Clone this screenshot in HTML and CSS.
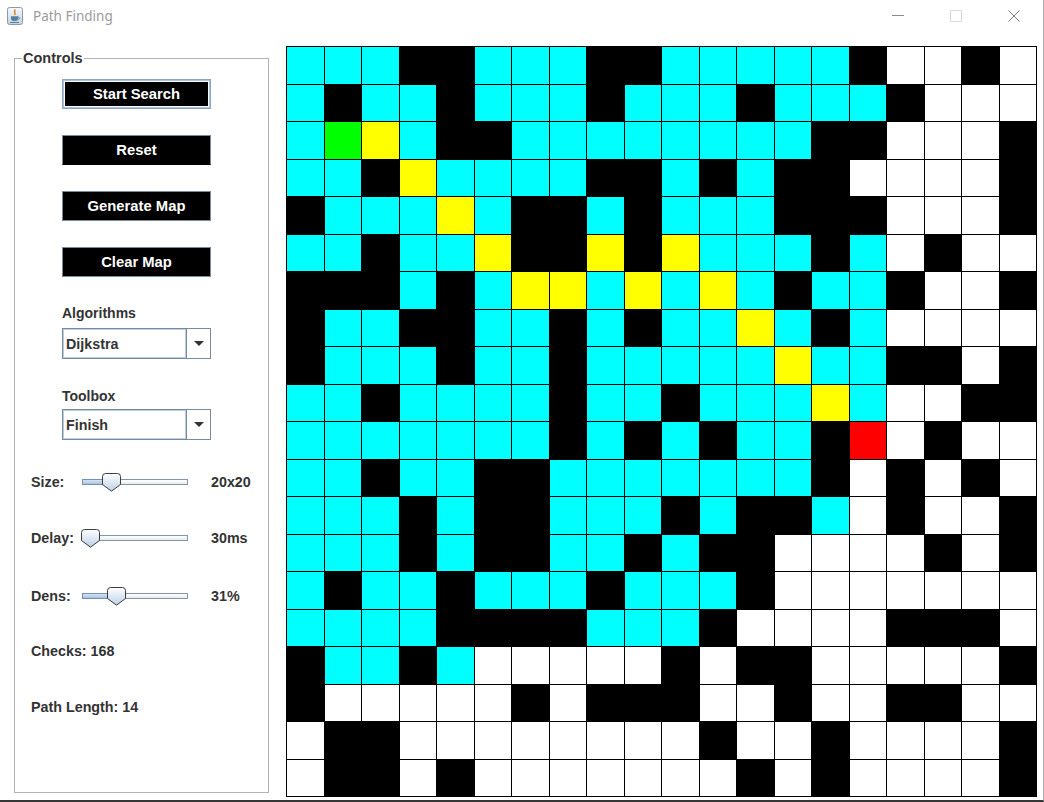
FILE: index.html
```html
<!DOCTYPE html>
<html lang="en">
<head>
<meta charset="utf-8">
<title>Path Finding</title>
<link rel="stylesheet" href="styles.css">
</head>
<body>
<div class="window">
  <div class="titlebar">
    <svg class="app-icon" width="16" height="18" viewBox="0 0 16 18">
      <defs><linearGradient id="ig" x1="0" y1="0" x2="0" y2="1"><stop offset="0" stop-color="#f7f9fb"/><stop offset="1" stop-color="#c6d0dc"/></linearGradient></defs>
      <rect x="0.5" y="0.5" width="15" height="17" rx="2" fill="url(#ig)" stroke="#8c9aab"/>
      <path d="M8.2 2.5 C6.2 4.5 9.4 5.6 7.6 8" stroke="#e76f00" fill="none" stroke-width="1.3"/>
      <path d="M4 9.3 H11 V11.5 C11 13.4 9.6 14 7.5 14 C5.4 14 4 13.4 4 11.5 Z" fill="#5382a1"/>
      <path d="M11 10 C13.2 10 13.2 12.6 10.6 12.6" stroke="#5382a1" fill="none"/>
      <path d="M3 15.5 H12" stroke="#5382a1"/>
    </svg>
    <span class="title">Path Finding</span>
    <div class="caption-buttons">
      <span class="cap"><svg width="12" height="12" viewBox="0 0 12 12"><path d="M0 5.5 H12" stroke="#8a8a8a"/></svg></span>
      <span class="cap"><svg width="12" height="12" viewBox="0 0 12 12"><rect x="0.5" y="0.5" width="11" height="11" fill="none" stroke="#dcdcdc"/></svg></span>
      <span class="cap"><svg width="12" height="12" viewBox="0 0 12 12"><path d="M0.5 0.5 L11.5 11.5 M11.5 0.5 L0.5 11.5" stroke="#7a7a7a"/></svg></span>
    </div>
  </div>
  <div class="main">
    <div class="side">
      <fieldset class="controls">
        <legend>Controls</legend>
        <div class="controls-body">
          <button class="btn btn-first btn-focused">Start Search</button>
          <button class="btn btn-pressed">Reset</button>
          <button class="btn">Generate Map</button>
          <button class="btn">Clear Map</button>
          <div class="label label-algo">Algorithms</div>
          <div class="combo combo-algo">
            <span class="combo-field">Dijkstra</span>
            <span class="combo-btn"><span class="arrow"></span></span>
          </div>
          <div class="label label-tool">Toolbox</div>
          <div class="combo combo-tool">
            <span class="combo-field">Finish</span>
            <span class="combo-btn"><span class="arrow"></span></span>
          </div>
          <div class="slider-row row-size">
            <span class="slider-label">Size:</span>
            <span class="track"><span class="fill" style="width:29px"></span><svg class="thumb" style="left:19px" width="19" height="19" viewBox="0 0 19 19"><defs><linearGradient id="tg1" x1="0" y1="0" x2="0" y2="1"><stop offset="0" stop-color="#ffffff"/><stop offset="1" stop-color="#bcd0e6"/></linearGradient></defs><path d="M0.5 3.5 Q0.5 0.5 3.5 0.5 H15.5 Q18.5 0.5 18.5 3.5 V11.5 L9.5 18.2 L0.5 11.5 Z" fill="url(#tg1)" stroke="#3c3c3c"/></svg></span>
            <span class="slider-value">20x20</span>
          </div>
          <div class="slider-row row-delay">
            <span class="slider-label">Delay:</span>
            <span class="track"><svg class="thumb" style="left:-2px" width="19" height="19" viewBox="0 0 19 19"><defs><linearGradient id="tg2" x1="0" y1="0" x2="0" y2="1"><stop offset="0" stop-color="#ffffff"/><stop offset="1" stop-color="#bcd0e6"/></linearGradient></defs><path d="M0.5 3.5 Q0.5 0.5 3.5 0.5 H15.5 Q18.5 0.5 18.5 3.5 V11.5 L9.5 18.2 L0.5 11.5 Z" fill="url(#tg2)" stroke="#3c3c3c"/></svg></span>
            <span class="slider-value">30ms</span>
          </div>
          <div class="slider-row row-dens">
            <span class="slider-label">Dens:</span>
            <span class="track"><span class="fill" style="width:34px"></span><svg class="thumb" style="left:24px" width="19" height="19" viewBox="0 0 19 19"><defs><linearGradient id="tg3" x1="0" y1="0" x2="0" y2="1"><stop offset="0" stop-color="#ffffff"/><stop offset="1" stop-color="#bcd0e6"/></linearGradient></defs><path d="M0.5 3.5 Q0.5 0.5 3.5 0.5 H15.5 Q18.5 0.5 18.5 3.5 V11.5 L9.5 18.2 L0.5 11.5 Z" fill="url(#tg3)" stroke="#3c3c3c"/></svg></span>
            <span class="slider-value">31%</span>
          </div>
          <div class="stat stat-checks">Checks: 168</div>
          <div class="stat stat-path">Path Length: 14</div>
        </div>
      </fieldset>
    </div>
    <div class="grid">
<i class="v"></i><i class="v"></i><i class="v"></i><i class="w"></i><i class="w"></i><i class="v"></i><i class="v"></i><i class="v"></i><i class="w"></i><i class="w"></i><i class="v"></i><i class="v"></i><i class="v"></i><i class="v"></i><i class="v"></i><i class="w"></i><i class="e"></i><i class="e"></i><i class="w"></i><i class="e"></i>
<i class="v"></i><i class="w"></i><i class="v"></i><i class="v"></i><i class="w"></i><i class="v"></i><i class="v"></i><i class="v"></i><i class="w"></i><i class="v"></i><i class="v"></i><i class="v"></i><i class="w"></i><i class="v"></i><i class="v"></i><i class="v"></i><i class="w"></i><i class="e"></i><i class="e"></i><i class="e"></i>
<i class="v"></i><i class="s"></i><i class="p"></i><i class="v"></i><i class="w"></i><i class="w"></i><i class="v"></i><i class="v"></i><i class="v"></i><i class="v"></i><i class="v"></i><i class="v"></i><i class="v"></i><i class="v"></i><i class="w"></i><i class="w"></i><i class="e"></i><i class="e"></i><i class="e"></i><i class="w"></i>
<i class="v"></i><i class="v"></i><i class="w"></i><i class="p"></i><i class="v"></i><i class="v"></i><i class="v"></i><i class="v"></i><i class="w"></i><i class="w"></i><i class="v"></i><i class="w"></i><i class="v"></i><i class="w"></i><i class="w"></i><i class="e"></i><i class="e"></i><i class="e"></i><i class="e"></i><i class="w"></i>
<i class="w"></i><i class="v"></i><i class="v"></i><i class="v"></i><i class="p"></i><i class="v"></i><i class="w"></i><i class="w"></i><i class="v"></i><i class="w"></i><i class="v"></i><i class="v"></i><i class="v"></i><i class="w"></i><i class="w"></i><i class="w"></i><i class="e"></i><i class="e"></i><i class="e"></i><i class="w"></i>
<i class="v"></i><i class="v"></i><i class="w"></i><i class="v"></i><i class="v"></i><i class="p"></i><i class="w"></i><i class="w"></i><i class="p"></i><i class="w"></i><i class="p"></i><i class="v"></i><i class="v"></i><i class="v"></i><i class="w"></i><i class="v"></i><i class="e"></i><i class="w"></i><i class="e"></i><i class="e"></i>
<i class="w"></i><i class="w"></i><i class="w"></i><i class="v"></i><i class="w"></i><i class="v"></i><i class="p"></i><i class="p"></i><i class="v"></i><i class="p"></i><i class="v"></i><i class="p"></i><i class="v"></i><i class="w"></i><i class="v"></i><i class="v"></i><i class="w"></i><i class="e"></i><i class="e"></i><i class="w"></i>
<i class="w"></i><i class="v"></i><i class="v"></i><i class="w"></i><i class="w"></i><i class="v"></i><i class="v"></i><i class="w"></i><i class="v"></i><i class="w"></i><i class="v"></i><i class="v"></i><i class="p"></i><i class="v"></i><i class="w"></i><i class="v"></i><i class="e"></i><i class="e"></i><i class="e"></i><i class="e"></i>
<i class="w"></i><i class="v"></i><i class="v"></i><i class="v"></i><i class="w"></i><i class="v"></i><i class="v"></i><i class="w"></i><i class="v"></i><i class="v"></i><i class="v"></i><i class="v"></i><i class="v"></i><i class="p"></i><i class="v"></i><i class="v"></i><i class="w"></i><i class="w"></i><i class="e"></i><i class="w"></i>
<i class="v"></i><i class="v"></i><i class="w"></i><i class="v"></i><i class="v"></i><i class="v"></i><i class="v"></i><i class="w"></i><i class="v"></i><i class="v"></i><i class="w"></i><i class="v"></i><i class="v"></i><i class="v"></i><i class="p"></i><i class="v"></i><i class="e"></i><i class="e"></i><i class="w"></i><i class="w"></i>
<i class="v"></i><i class="v"></i><i class="v"></i><i class="v"></i><i class="v"></i><i class="v"></i><i class="v"></i><i class="w"></i><i class="v"></i><i class="w"></i><i class="v"></i><i class="w"></i><i class="v"></i><i class="v"></i><i class="w"></i><i class="f"></i><i class="e"></i><i class="w"></i><i class="e"></i><i class="e"></i>
<i class="v"></i><i class="v"></i><i class="w"></i><i class="v"></i><i class="v"></i><i class="w"></i><i class="w"></i><i class="v"></i><i class="v"></i><i class="v"></i><i class="v"></i><i class="v"></i><i class="v"></i><i class="v"></i><i class="w"></i><i class="e"></i><i class="w"></i><i class="e"></i><i class="w"></i><i class="e"></i>
<i class="v"></i><i class="v"></i><i class="v"></i><i class="w"></i><i class="v"></i><i class="w"></i><i class="w"></i><i class="v"></i><i class="v"></i><i class="v"></i><i class="w"></i><i class="v"></i><i class="w"></i><i class="w"></i><i class="v"></i><i class="e"></i><i class="w"></i><i class="e"></i><i class="e"></i><i class="w"></i>
<i class="v"></i><i class="v"></i><i class="v"></i><i class="w"></i><i class="v"></i><i class="w"></i><i class="w"></i><i class="v"></i><i class="v"></i><i class="w"></i><i class="v"></i><i class="w"></i><i class="w"></i><i class="e"></i><i class="e"></i><i class="e"></i><i class="e"></i><i class="w"></i><i class="e"></i><i class="w"></i>
<i class="v"></i><i class="w"></i><i class="v"></i><i class="v"></i><i class="w"></i><i class="v"></i><i class="v"></i><i class="v"></i><i class="w"></i><i class="v"></i><i class="v"></i><i class="v"></i><i class="w"></i><i class="e"></i><i class="e"></i><i class="e"></i><i class="e"></i><i class="e"></i><i class="e"></i><i class="e"></i>
<i class="v"></i><i class="v"></i><i class="v"></i><i class="v"></i><i class="w"></i><i class="w"></i><i class="w"></i><i class="w"></i><i class="v"></i><i class="v"></i><i class="v"></i><i class="w"></i><i class="e"></i><i class="e"></i><i class="e"></i><i class="e"></i><i class="w"></i><i class="w"></i><i class="w"></i><i class="e"></i>
<i class="w"></i><i class="v"></i><i class="v"></i><i class="w"></i><i class="v"></i><i class="e"></i><i class="e"></i><i class="e"></i><i class="e"></i><i class="e"></i><i class="w"></i><i class="e"></i><i class="w"></i><i class="w"></i><i class="e"></i><i class="e"></i><i class="e"></i><i class="e"></i><i class="e"></i><i class="w"></i>
<i class="w"></i><i class="e"></i><i class="e"></i><i class="e"></i><i class="e"></i><i class="e"></i><i class="w"></i><i class="e"></i><i class="w"></i><i class="w"></i><i class="w"></i><i class="e"></i><i class="e"></i><i class="w"></i><i class="e"></i><i class="e"></i><i class="w"></i><i class="w"></i><i class="e"></i><i class="e"></i>
<i class="e"></i><i class="w"></i><i class="w"></i><i class="e"></i><i class="e"></i><i class="e"></i><i class="e"></i><i class="e"></i><i class="e"></i><i class="e"></i><i class="e"></i><i class="w"></i><i class="e"></i><i class="e"></i><i class="w"></i><i class="e"></i><i class="e"></i><i class="e"></i><i class="e"></i><i class="w"></i>
<i class="e"></i><i class="w"></i><i class="w"></i><i class="e"></i><i class="w"></i><i class="e"></i><i class="e"></i><i class="e"></i><i class="e"></i><i class="e"></i><i class="e"></i><i class="e"></i><i class="w"></i><i class="e"></i><i class="w"></i><i class="e"></i><i class="e"></i><i class="e"></i><i class="e"></i><i class="w"></i>
    </div>
  </div>
</div>
</body>
</html>
```

FILE: styles.css
```css
* { box-sizing: border-box; }
html, body { margin: 0; padding: 0; background: #fff; }
body {
  width: 1044px;
  height: 802px;
  overflow: hidden;
  font-family: "Liberation Sans", Arial, sans-serif;
}

.window {
  width: 1044px;
  height: 802px;
  display: flex;
  flex-direction: column;
  background: #fff;
  border-right: 1px solid #a8a8a8;
  border-bottom: 2px solid #363636;
}

/* title bar */
.titlebar {
  flex: none;
  height: 32px;
  display: flex;
  align-items: center;
}
.app-icon { margin-left: 7px; flex: none; }
.title {
  margin-left: 10px;
  font-family: "Noto Sans", "Open Sans", sans-serif;
  font-size: 13.5px;
  color: #9c9c9c;
  line-height: 18px;
}
.caption-buttons {
  margin-left: auto;
  display: flex;
  height: 32px;
}
.cap {
  width: 58px;
  height: 32px;
  display: flex;
  align-items: center;
  justify-content: center;
}

/* main area */
.main {
  flex: 1;
  display: flex;
  align-items: flex-start;
}
.side { width: 286px; flex: none; }

.controls {
  margin: 18px 0 0 14px;
  width: 255px;
  height: 743px;
  border: 1px solid #b2b2b2;
  padding: 0;
  min-width: 0;
}
.controls legend {
  margin-left: 7px;
  padding: 0 1px;
  font-weight: bold;
  font-size: 14.5px;
  line-height: 16px;
  color: #333;
}
.controls-body {
  display: flex;
  flex-direction: column;
  align-items: flex-start;
}

.btn {
  margin: 26px 0 0 47px;
  width: 149px;
  height: 30px;
  padding: 0;
  background: #000;
  color: #fff;
  font-family: "Liberation Sans", Arial, sans-serif;
  font-weight: bold;
  font-size: 14.8px;
  border: 1px solid #7a8a99;
  border-radius: 0;
  display: flex;
  align-items: center;
  justify-content: center;
}
.btn-first { margin-top: 13px; }
.btn-focused {
  border-color: #8ea6c0;
  box-shadow: inset 0 0 0 1px #a9c3de, inset 0 0 0 2px #ffffff;
}
.btn-pressed { border-bottom-color: #000; }

.label {
  margin-left: 47px;
  font-weight: bold;
  font-size: 14px;
  line-height: 16px;
  color: #333;
}
.label-algo { margin-top: 28px; }
.label-tool { margin-top: 29px; }

.combo {
  margin-left: 47px;
  width: 149px;
  height: 31px;
  border: 1px solid #7a8a99;
  background: #fff;
  display: flex;
}
.combo-algo { margin-top: 7px; }
.combo-tool { margin-top: 5px; }
.combo-field {
  flex: 1;
  border: 1px solid #b9cde5;
  padding-left: 2px;
  display: flex;
  align-items: center;
  font-weight: bold;
  font-size: 14.3px;
  color: #333;
}
.combo-btn {
  width: 24px;
  flex: none;
  border-left: 1px solid #7a8a99;
  display: flex;
  align-items: center;
  justify-content: center;
}
.arrow {
  width: 0;
  height: 0;
  border-left: 5px solid transparent;
  border-right: 5px solid transparent;
  border-top: 5px solid #333;
}

/* sliders */
.slider-row {
  margin-left: 16px;
  height: 20px;
  display: flex;
  align-items: center;
  font-weight: bold;
  font-size: 14.3px;
  color: #333;
}
.row-size { margin-top: 32px; }
.row-delay { margin-top: 36px; }
.row-dens { margin-top: 38px; }
.slider-label { width: 51px; flex: none; }
.track {
  position: relative;
  width: 106px;
  height: 6px;
  flex: none;
  border: 1px solid #8595a6;
  background: linear-gradient(#ffffff, #e6ecf2);
  margin-top: -1px;
}
.fill {
  position: absolute;
  left: -1px;
  top: -1px;
  height: 6px;
  border: 1px solid #6f8fbf;
  background: linear-gradient(#d7e4f2, #a9c1de);
}
.thumb {
  position: absolute;
  top: -7px;
}
.slider-value { margin-left: 23px; }

.stat {
  margin-left: 16px;
  font-weight: bold;
  font-size: 14.3px;
  line-height: 16px;
  color: #333;
}
.stat-checks { margin-top: 37px; }
.stat-path { margin-top: 40px; }

/* grid */
.grid {
  margin-top: 14px;
  width: 751px;
  height: 751px;
  flex: none;
  display: grid;
  grid-template-columns: repeat(20, 1fr);
  grid-template-rows: repeat(20, 1fr);
  gap: 1px;
  padding: 1px;
  background: #000;
}
.grid i { display: block; }
.grid i.v { background: #00ffff; }
.grid i.w { background: #000000; }
.grid i.e { background: #ffffff; }
.grid i.p { background: #ffff00; }
.grid i.s { background: #00ff00; }
.grid i.f { background: #ff0000; }
```
